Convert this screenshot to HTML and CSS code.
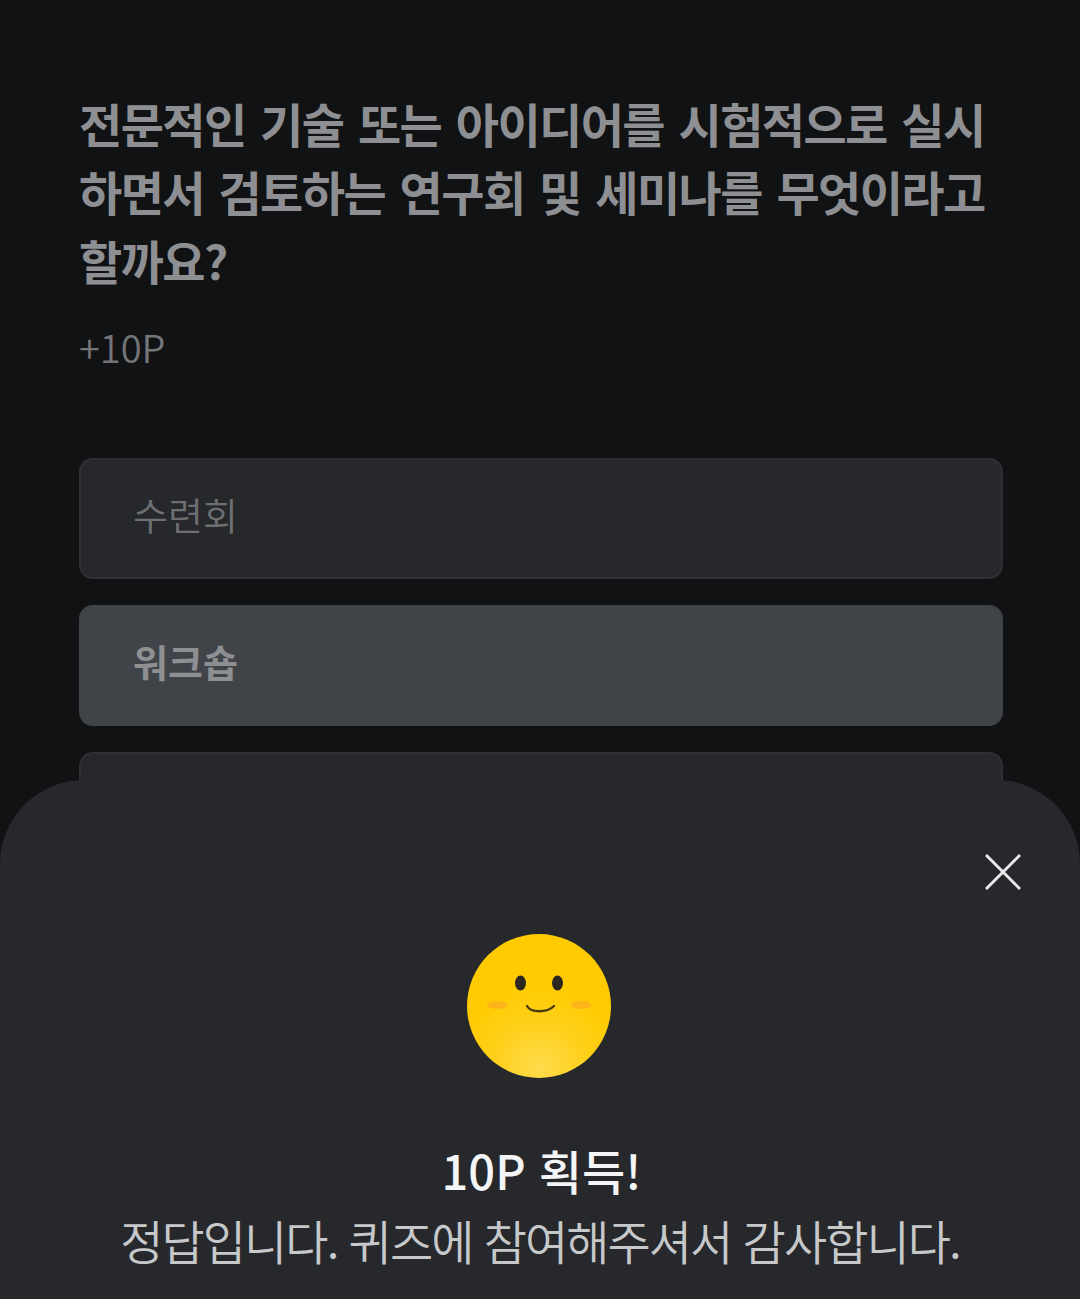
FILE: index.html
```html
<!DOCTYPE html>
<html lang="ko">
<head>
<meta charset="utf-8">
<title>퀴즈</title>
<link rel="stylesheet" href="styles.css">
</head>
<body>
<main class="quiz">
  <h1 class="question">전문적인 기술 또는 아이디어를 시험적으로 실시하면서 검토하는 연구회 및 세미나를 무엇이라고 할까요?</h1>
  <p class="points">+10P</p>
  <ul class="options">
    <li class="option">수련회</li>
    <li class="option option-selected">워크숍</li>
    <li class="option">세미나</li>
  </ul>
</main>
<section class="sheet">
  <button class="close" aria-label="닫기">
    <svg viewBox="0 0 36 36" width="36" height="36"><path d="M1 1 L35 35 M35 1 L1 35" stroke="#e9e9ea" stroke-width="3" fill="none"/></svg>
  </button>
  <svg class="smile" viewBox="0 0 144 144" width="144" height="144">
    <defs>
      <radialGradient id="face" gradientUnits="userSpaceOnUse" cx="72" cy="134" r="84">
        <stop offset="0" stop-color="#ffdb4d"/>
        <stop offset="0.55" stop-color="#ffd01a"/>
        <stop offset="1" stop-color="#ffcb00"/>
      </radialGradient>
    </defs>
    <circle cx="72" cy="72" r="72" fill="url(#face)"/>
    <ellipse cx="30" cy="71" rx="10.5" ry="4" fill="#fdb51a"/>
    <ellipse cx="114" cy="71" rx="10.5" ry="4" fill="#fdb51a"/>
    <ellipse cx="53.500" cy="49" rx="5.500" ry="7.500" fill="#2b2620"/>
    <ellipse cx="90.500" cy="49" rx="5.500" ry="7.500" fill="#2b2620"/>
    <path d="M60 72 C64 79 80 79 87 72" stroke="#4a3a10" stroke-width="2.400" fill="none" stroke-linecap="round"/>
  </svg>
  <h2 class="sheet-title">10P 획득!</h2>
  <p class="sheet-text">정답입니다. 퀴즈에 참여해주셔서 감사합니다.</p>
</section>
</body>
</html>
```
FILE: styles.css
```css
* { box-sizing: border-box; }
html, body { margin: 0; height: 1299px; overflow: hidden; }
body {
  position: relative;
  background: #111214;
  font-family: "Noto Sans CJK KR", "Noto Sans", sans-serif;
}
.quiz { padding: 89px 77px 0 79px; }
.question {
  margin: 0;
  font-size: 47px;
  font-weight: 700;
  line-height: 68.4px;
  letter-spacing: -1.6px;
  word-spacing: 3px;
  color: #8e8f93;
}
.points {
  margin: 26px 0 0;
  font-size: 38px;
  font-weight: 350;
  line-height: 54px;
  color: #747579;
}
.options {
  list-style: none;
  margin: 84px 0 0;
  padding: 0;
  display: flex;
  flex-direction: column;
  gap: 26px;
}
.option {
  height: 121px;
  padding: 0 52px 10px;
  display: flex;
  align-items: center;
  background: #26282c;
  border: 2px solid #2f3034;
  border-radius: 14px;
  font-size: 38px;
  font-weight: 350;
  color: #6e6f73;
}
.option-selected {
  background: #404347;
  border-color: #404347;
  font-weight: 700;
  color: #8e8f93;
}
.sheet {
  position: absolute;
  left: 0;
  right: 0;
  top: 780px;
  bottom: 0;
  background: #26282c;
  border-radius: 84px 84px 0 0;
  display: flex;
  flex-direction: column;
  align-items: center;
  padding-top: 154px;
}
.close {
  position: absolute;
  top: 74px;
  right: 59px;
  width: 36px;
  height: 36px;
  padding: 0;
  border: 0;
  background: none;
  line-height: 0;
}
.smile { display: block; flex: none; margin-right: 3px; }
.sheet-title {
  margin: 58px 0 0 3px;
  font-size: 47px;
  font-weight: 500;
  line-height: 68px;
  color: #f4f5f6;
}
.sheet-text {
  margin: 2px 0 0;
  font-size: 47px;
  font-weight: 350;
  line-height: 68px;
  letter-spacing: -1.95px;
  color: #c6c8ca;
  white-space: nowrap;
}
```
